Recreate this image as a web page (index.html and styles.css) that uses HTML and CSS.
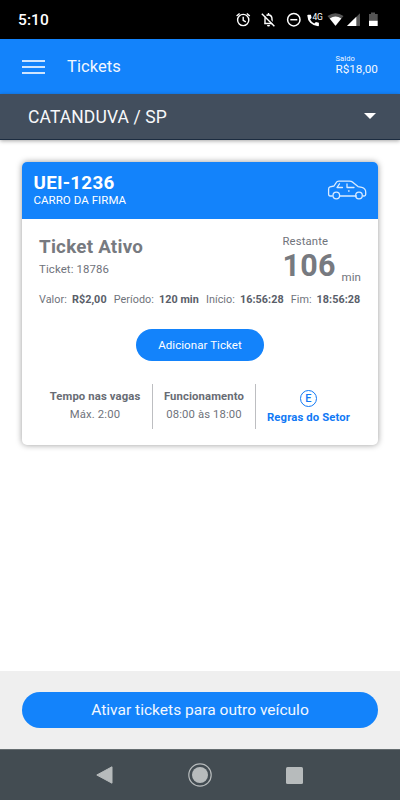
FILE: index.html
```html
<!DOCTYPE html>
<html lang="pt-BR">
<head>
<meta charset="utf-8">
<meta name="viewport" content="width=device-width, initial-scale=1">
<title>Tickets</title>
<link rel="stylesheet" href="styles.css">
</head>
<body>
<div class="screen">
  <div class="status">
    <span class="clock">5:10</span>
    <svg class="status-icons" width="150" height="20" viewBox="235 10 150 20" fill="none" stroke="#fff">
      <g stroke-width="1.4"><circle cx="243.2" cy="20" r="5.6"/><path d="M243.2 16.7v3.6l2.6 1.6M236.6 16l3-2.5M249.8 16l-3-2.5"/></g>
      <g stroke-width="1.4"><path d="M264.2 23.5h8.6M265 23.5v-4.5q0-3.6 3.5-4.2q3.5.6 3.5 4.2v4.5M268.5 13v2"/><path stroke="#000" stroke-width="1.5" d="M263 13l12.5 12.6"/><path d="M261.8 13.8l12.6 12.4"/><path stroke="none" fill="#fff" d="M267 25h3a1.5 1.5 0 0 1-3 0z"/></g>
      <g stroke-width="1.5"><circle cx="293.8" cy="19.7" r="6.2"/><path d="M290.3 19.7h7"/></g>
      <path stroke="none" fill="#fff" d="M308.2 14.8h2.700l.7 3-1.500 1.600q1.500 2.800 4.200 4.200l1.600-1.500 3 .7v2.600q0 .8-.8.8-4.800-.3-7.900-3.400-2.700-2.900-2.900-7.300 0-.7.9-.7z"/>
      <text x="312.500" y="19.500">4G</text>
      <path stroke="none" fill="#555" d="M327.500 16q8-5.600 16 0l-8 10z"/>
      <path stroke="none" fill="#fff" d="M329.700 18.400q5.800-3.600 11.600 0l-5.800 7.300z"/>
      <path stroke="none" fill="#555" d="M360 13.200v12.800h-13z"/>
      <path stroke="none" fill="#fff" d="M356.300 16.800v9.200h-9.300z"/>
      <path stroke="none" fill="#555" d="M369 14h2v-1.500h4v1.500h2.700v7h-8.700z"/>
      <path stroke="none" fill="#fff" d="M369 20.800h8.700v5.200h-8.700z"/>
    </svg>
  </div>
  <header class="appbar">
    <div class="menu"><i></i><i></i><i></i></div>
    <h1 class="title">Tickets</h1>
    <div class="balance"><span class="balance-label">Saldo</span><span class="balance-value">R$18,00</span></div>
  </header>
  <div class="city">
    <span>CATANDUVA / SP</span>
    <svg width="12" height="6" viewBox="0 0 12 6"><path d="M0 0h12L6 6z" fill="#fff"/></svg>
  </div>
  <main class="content">
    <section class="card">
      <div class="card-head">
        <div>
          <div class="plate">UEI-1236</div>
          <div class="owner">CARRO DA FIRMA</div>
        </div>
        <svg class="car" width="40" height="20" viewBox="0 0 40 20" fill="none" stroke="#d9ebff" stroke-width="1.300" stroke-linecap="round" stroke-linejoin="round">
          <path d="M5.300 16H3.200Q1.600 16 1.600 14V9Q1.600 7.300 3 6.900L7 6 9.200 2.600Q10 1.200 11.800 1.200H22.500Q24.300 1.200 26 2.400L31 6.600 34.800 7.300Q38.700 8.300 38.700 12V14.500Q38.700 16 37.200 16H36.300M12.800 16H29.300"/>
          <circle cx="9.300" cy="15.500" r="3.300"/><circle cx="32" cy="15.500" r="3.300"/>
          <path d="M12.500 3.800L10 7.500H15.500M20 4V7.500H27M21.500 11h.6"/>
        </svg>
      </div>
      <div class="card-body">
        <div class="summary">
          <div><div class="state">Ticket Ativo</div><div class="number">Ticket: 18786</div></div>
          <div class="remaining">
            <div class="remaining-label">Restante</div>
            <div class="remaining-time"><b>106</b><span>min</span></div>
          </div>
        </div>
        <div class="facts">
          <span>Valor:</span><b>R$2,00</b>
          <span>Período:</span><b>120 min</b>
          <span>Início:</span><b>16:56:28</b>
          <span>Fim:</span><b>18:56:28</b>
        </div>
        <button class="add">Adicionar Ticket</button>
        <div class="rules">
          <div class="rule"><b>Tempo nas vagas</b><span>Máx. 2:00</span></div>
          <div class="rule"><b>Funcionamento</b><span>08:00 às 18:00</span></div>
          <div class="rule sector"><i class="zone">E</i><b>Regras do Setor</b></div>
        </div>
      </div>
    </section>
  </main>
  <footer class="footer"><button class="activate">Ativar tickets para outro veículo</button></footer>
  <nav class="nav">
    <svg width="17" height="18" viewBox="0 0 17 18"><path d="M16 .8v16.400L.8 9z" fill="#b7bbbc" stroke="#b7bbbc" stroke-linejoin="round"/></svg>
    <svg width="24" height="24" viewBox="0 0 24 24"><circle cx="12" cy="12" r="11.200" fill="none" stroke="#b7bbbc" stroke-width="1.200"/><circle cx="12" cy="12" r="8" fill="#b7bbbc"/></svg>
    <svg class="recent" width="17" height="17" viewBox="0 0 17 17"><rect width="17" height="17" rx="1.500" fill="#b7bbbc"/></svg>
  </nav>
</div>
</body>
</html>
```
FILE: styles.css
```css
* { box-sizing: border-box; }
body { margin: 0; font-family: Roboto, "Liberation Sans", sans-serif; color: #6f737b; background: #fff; }
button { border: 0; font-family: inherit; color: #fff; background: #1383fb; padding: 0; }
svg { display: block; flex: none; }
.screen { width: 400px; height: 800px; display: flex; flex-direction: column; overflow: hidden; }

.status { height: 39px; flex: none; background: #000; display: flex; justify-content: space-between; align-items: center; padding: 0 15px 0 18px; }
.clock { color: #fff; font-size: 15.500px; font-weight: 500; line-height: 20px; letter-spacing: .1px; }
.status-icons text { font-size: 8.500px; fill: #fff; stroke: none; letter-spacing: -.3px; }

.appbar { height: 55px; flex: none; background: #1383fb; color: #f1f7ff; display: flex; align-items: center; padding: 0 22px; }
.menu { width: 23px; display: flex; flex-direction: column; gap: 4px; }
.menu i { height: 2px; background: #cfe5fe; }
.title { margin: 0 0 0 22px; font-size: 16.500px; font-weight: 400; line-height: 20px; letter-spacing: .05px; }
.balance { margin-left: auto; width: 42.500px; display: flex; flex-direction: column; padding-bottom: 3px; }
.balance-label { font-size: 7.500px; line-height: 9px; letter-spacing: .1px; }
.balance-value { font-size: 11.700px; line-height: 13px; white-space: nowrap; }

.city { height: 46px; flex: none; background: #424e5d; border-bottom: 1px solid #1c2c40; color: #f7f8fa; display: flex; align-items: center; justify-content: space-between; padding: 0 24px 0 28px; font-size: 17.500px; line-height: 20px; letter-spacing: .1px; box-shadow: 0 1px 4px rgba(0,0,0,.35); }
.city span { padding-top: 1px; }
.city svg { margin-bottom: 2px; }

.content { flex: 1; padding: 22px 22px 0; }
.card { height: 283px; border-radius: 5px; background: #fff; box-shadow: 0 0 6px rgba(0,0,0,.4); overflow: hidden; }
.card-head { height: 57px; background: #1383fb; color: #fff; display: flex; justify-content: space-between; padding: 10px 11px 0 11.500px; }
.plate { font-size: 18.800px; font-weight: 700; line-height: 22px; letter-spacing: .25px; }
.owner { font-size: 11.500px; line-height: 13px; letter-spacing: .05px; }
.car { margin-top: 8px; }
.card-body { padding: 14px 17px 0; }
.summary { height: 57px; display: flex; justify-content: space-between; }
.state { padding-top: 3px; font-size: 18.800px; font-weight: 700; line-height: 23px; letter-spacing: .25px; color: #777a80; }
.number { margin-top: 3px; font-size: 11.400px; line-height: 14px; letter-spacing: .12px; }
.remaining { width: 78.500px; }
.remaining-label { margin-top: 2px; font-size: 11.300px; line-height: 14px; letter-spacing: .15px; }
.remaining-time { display: flex; align-items: flex-end; height: 34px; }
.remaining-time b { font-size: 30.500px; line-height: 34px; color: #777a80; letter-spacing: .2px; }
.remaining-time span { font-size: 11.500px; line-height: 13px; margin: 0 0 -1px 6px; }
.facts { margin-top: 3px; display: flex; white-space: nowrap; font-size: 10.800px; line-height: 14px; letter-spacing: .06px; }
.facts b { margin: 0 7px 0 5px; color: #595e69; }
.facts b:last-child { margin-right: 0; }
.add { display: block; width: 128px; height: 32px; margin: 22px auto 0; border-radius: 16px; font-size: 11.500px; line-height: 32px; letter-spacing: .07px; }
.rules { margin: 23px 0 0 -1px; height: 45px; display: grid; grid-template-columns: 115px 103px 105px; }
.rule { display: flex; flex-direction: column; align-items: center; padding-top: 6px; font-size: 11.300px; line-height: 14px; letter-spacing: .12px; white-space: nowrap; border-right: 1px solid #bdbec1; }
.rule span { margin-top: 4px; }
.rule b { color: #686c74; }
.sector { border: 0; }
.rule.sector b { color: #1179f5; margin-top: 5px; }
.zone { width: 17px; height: 17px; margin-bottom: -1px; border: 1.500px solid #1179f5; border-radius: 50%; color: #1179f5; font-size: 11px; font-style: normal; font-weight: 500; line-height: 15px; text-align: center; }

.footer { height: 78px; flex: none; background: #efefef; padding: 21px 22px; }
.activate { display: block; width: 356px; height: 36px; border-radius: 18px; font-size: 15.550px; line-height: 35px; color: #f1f7ff; }
.nav { height: 51px; flex: none; background: #434c52; border-top: 1px solid #656d70; display: flex; justify-content: center; align-items: center; gap: 75px; padding-right: 1px; }
.recent { margin: 0 1px 0 -1px; }
```
